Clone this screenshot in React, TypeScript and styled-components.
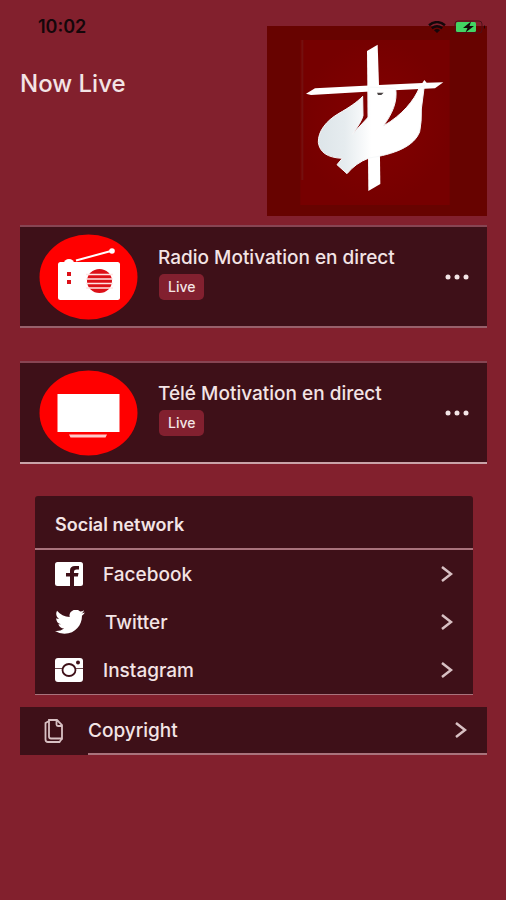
import React from "react";
import styled, { createGlobalStyle } from "styled-components";

const line = "#a9737c";

const GlobalStyle = createGlobalStyle`
  *, *::before, *::after { box-sizing: border-box; }
  body {
    margin: 0;
    background: #82202d;
    color: #f3e4e5;
    font-family: Inter, "Liberation Sans", sans-serif;
  }
`;

const Screen = styled.div`
  position: relative;
  min-height: 100vh;
  padding: 26px 19px 32px 20px;
`;

const StatusBar = styled.div`
  position: absolute;
  z-index: 1;
  top: 16px;
  left: 38px;
  right: 20px;
  display: flex;
  align-items: center;
  justify-content: space-between;
  color: #14070a;
`;

const Clock = styled.time`
  font-size: 18px;
  line-height: 22px;
  font-weight: 600;
`;

const StatusIcons = styled.div`
  display: flex;
  align-items: center;
  gap: 8px;

  svg { display: block; }
`;

const Header = styled.header`
  display: flex;
  justify-content: space-between;
  align-items: flex-start;
`;

const Title = styled.h1`
  margin: 42px 0 0;
  font-size: 24px;
  line-height: 32px;
  font-weight: 500;
`;

const Logo = styled.svg`
  display: block;
  flex: none;
  width: 220px;
  height: 190px;
`;

const StreamList = styled.main`
  display: flex;
  flex-direction: column;
  gap: 33px;
  margin-top: 9px;
`;

const Stream = styled.article<{ $top: string; $bottom: string }>`
  display: flex;
  align-items: flex-start;
  height: 103px;
  padding: 7px 18px 7px 19px;
  background: #3e1018;
  border-top: 2px solid ${(p) => p.$top};
  border-bottom: 2px solid ${(p) => p.$bottom};
`;

const StreamArt = styled.svg`
  display: block;
  flex: none;
  width: 99px;
  height: 86px;
`;

const StreamText = styled.div`
  flex: 1;
  display: flex;
  flex-direction: column;
  align-items: flex-start;
  gap: 4px;
  padding: 12px 0 0 20px;
`;

const StreamName = styled.h2`
  margin: 0;
  font-size: 19px;
  line-height: 24px;
  font-weight: 500;
`;

const Badge = styled.span`
  margin-left: 1px;
  padding: 0 9px;
  border-radius: 5px;
  background: #82202f;
  font-size: 14px;
  line-height: 26px;
  font-weight: 500;
`;

const MoreButton = styled.button`
  display: flex;
  align-self: center;
  padding: 8px 0;
  border: 0;
  background: none;
  color: inherit;
  cursor: pointer;
`;

const Social = styled.nav`
  margin: 32px 14px 0 15px;
  border-bottom: 1px solid ${line};
  border-radius: 3px 3px 0 0;
  background: #3e1018;
`;

const SocialTitle = styled.h2`
  margin: 0;
  padding: 16px 20px 11px;
  border-bottom: 2px solid ${line};
  font-size: 18px;
  line-height: 25px;
  font-weight: 600;
`;

const LinkRow = styled.a`
  display: flex;
  align-items: center;
  gap: 20px;
  height: 48px;
  padding: 0 20px;
  color: inherit;
  font-size: 19px;
  line-height: 24px;
  font-weight: 500;
  text-decoration: none;

  svg { display: block; flex: none; }
`;

const LinkLabel = styled.span`
  flex: 1;
  padding-top: 2px;
`;

const CopyrightRow = styled(LinkRow)`
  gap: 0;
  margin-top: 12px;
  padding: 0 0 0 22px;
  background: #3e1018;
`;

const CopyrightBody = styled.span`
  flex: 1;
  display: flex;
  align-items: center;
  height: 100%;
  margin-left: 22px;
  padding-right: 20px;
  border-bottom: 2px solid ${line};
`;

const Wifi = () => (
  <svg width="18" height="12" viewBox="0 0 18 12" fill="none" stroke="currentColor" strokeWidth="2.4">
    <path d="M1 4.2Q9-2 17 4.2M3.8 7.2Q9 3.2 14.2 7.2" />
    <path d="M6 9.2Q9 7 12 9.2L9 12Z" fill="currentColor" stroke="none" />
  </svg>
);

const Battery = () => (
  <svg width="32" height="14" viewBox="0 0 32 14">
    <rect x="1" y="1" width="27" height="12" rx="3" fill="none" stroke="#4e1019" />
    <path d="M30 5q2 2 0 4z" fill="#14070a" />
    <rect x="2" y="2" width="20" height="10" rx="1.5" fill="#42d463" />
    <path d="M17 1.500 9 8h4.500l-2 4.500L20 6h-4.500z" fill="#14070a" />
  </svg>
);

const DoveLogo = () => (
  <Logo viewBox="0 0 660 570" role="img" aria-label="Radio Motivation">
    <defs>
      <radialGradient id="panel">
        <stop offset="0" stopColor="#840000" />
        <stop offset="1" stopColor="#760000" />
      </radialGradient>
      <linearGradient id="dove">
        <stop offset="0" stopColor="#dde5e9" />
        <stop offset="0.25" stopColor="#e6ecef" />
        <stop offset="0.5" stopColor="#fff" />
      </linearGradient>
    </defs>
    <rect width="660" height="570" fill="#670300" />
    <rect x="100" y="42" width="448" height="495" fill="url(#panel)" />
    <path d="M106 42v420" stroke="#74100f" strokeWidth="6" />
    <g transform="translate(96 27)">
      <path d="M204 48 236 29 240 150 244 447 208 468Z" fill="#fff" />
      <path d="M21 176 48 160 240 150 370 144 376 135 383 143 433 142 408 160 240 168 36 180Z" fill="#fff" />
      <path
        d="M191 184C174 202 150 218 120 235C80 258 57 290 58 322C62 352 85 368 130 370L114 389L144 416Q170 384 210 369C285 358 345 335 362 290Q368 262 367 222L376 152L362 156C346 196 310 240 253 273C280 236 296 200 290 160L208 156L208 246L160 298Q188 260 192 242Z"
        fill="url(#dove)"
        stroke="#f7f9fa"
        strokeWidth="3"
      />
      <path d="M234 173h20l-7 7h-10z" fill="#4b4545" />
    </g>
  </Logo>
);

const RadioArt = () => (
  <StreamArt viewBox="0 0 99 86" aria-hidden="true">
    <ellipse cx="49.500" cy="43" rx="49" ry="42.500" fill="#ff0000" />
    <path d="M37 26.500 72 17" stroke="#fff" strokeWidth="2" />
    <circle cx="73" cy="17" r="2.800" fill="#fff" />
    <path d="M25 29a5 4 0 0 1 10 0z" fill="#fff" />
    <rect x="19" y="28" width="62" height="38" rx="2.500" fill="#fff" />
    <path d="M28 38h4v4h-4zM28 46h4v4h-4z" fill="#dc1018" />
    <ellipse cx="60.500" cy="47" rx="12.500" ry="12" fill="#dc1018" />
    <path d="M47 40.500h27M47 45h27M47 49.500h27M47 54h27" stroke="#ffe3e3" strokeWidth="1.600" />
  </StreamArt>
);

const TvArt = () => (
  <StreamArt viewBox="0 0 99 86" aria-hidden="true">
    <ellipse cx="49.500" cy="43" rx="49" ry="42.500" fill="#ff0000" />
    <rect x="18.500" y="24" width="62" height="38" fill="#fff" />
    <path d="M30 64.500h38l-1.500 3h-35z" fill="#ffc9c9" />
  </StreamArt>
);

const Dots = () => (
  <svg width="24" height="6" viewBox="0 0 24 6" fill="currentColor" aria-hidden="true">
    <circle cx="3" cy="3" r="2.500" />
    <circle cx="12" cy="3" r="2.500" />
    <circle cx="21" cy="3" r="2.500" />
  </svg>
);

const Chevron = () => (
  <svg width="13" height="16" viewBox="0 0 13 16" fill="none" stroke="#d8c0c3" strokeWidth="2.500" aria-hidden="true">
    <path d="M2 1 11 8 2 15" />
  </svg>
);

const FacebookIcon = () => (
  <svg width="28" height="24" viewBox="0 0 28 24" aria-hidden="true">
    <rect width="28" height="24" rx="2.500" fill="#fff" />
    <path d="M15 24v-9.500h-4v-3.500h4V8.500Q15 4 20 4h4v3.500h-2.500Q19 7.500 19 9.500V11h4.500l-.6 3.500H19V24z" fill="#3e1018" />
  </svg>
);

const TwitterIcon = () => (
  <svg width="30" height="24" viewBox="0 2.500 24 19.500" preserveAspectRatio="none" fill="#fff" aria-hidden="true">
    <path d="M23.954 4.569a10 10 0 0 1-2.825.775 4.958 4.958 0 0 0 2.163-2.723c-.951.555-2.005.959-3.127 1.184a4.920 4.920 0 0 0-8.384 4.482C7.691 8.094 4.066 6.130 1.640 3.161a4.822 4.822 0 0 0-.666 2.475c0 1.710.870 3.213 2.188 4.096a4.904 4.904 0 0 1-2.228-.616v.061a4.923 4.923 0 0 0 3.946 4.827 4.996 4.996 0 0 1-2.212.085 4.937 4.937 0 0 0 4.604 3.417 9.868 9.868 0 0 1-6.102 2.105c-.39 0-.779-.023-1.170-.067a13.995 13.995 0 0 0 7.557 2.209c9.054 0 13.999-7.496 13.999-13.986 0-.209 0-.42-.015-.630a9.936 9.936 0 0 0 2.413-2.568z" />
  </svg>
);

const InstagramIcon = () => (
  <svg width="28" height="24" viewBox="0 0 28 24" aria-hidden="true">
    <rect width="28" height="24" rx="3" fill="#fff" />
    <path d="M0 10.500h8M20 10.500h8" stroke="#6b4950" strokeWidth="1" />
    <ellipse cx="14" cy="12" rx="6.500" ry="6" fill="#fff" stroke="#3e1018" strokeWidth="1.800" />
    <circle cx="23" cy="4.500" r="2" fill="#3e1018" />
  </svg>
);

const PagesIcon = () => (
  <svg width="24" height="26" viewBox="0 0 24 26" fill="none" stroke="#d8c0c3" strokeWidth="1.800" aria-hidden="true">
    <path d="M7 2h8l5 5v13.500H9Q7 20.500 7 18.500zM14.500 2v4.500Q14.500 8 16 8H20" />
    <path d="M7 3 3.500 5v16.500Q3.500 24 6 24h11.500l2.500-3.500" />
  </svg>
);

const streams = [
  { name: "Radio Motivation en direct", Art: RadioArt, top: "#874553", bottom: "#98606b" },
  { name: "Télé Motivation en direct", Art: TvArt, top: "#874553", bottom: "#c9a3a8" },
];

const networks = [
  { name: "Facebook", Icon: FacebookIcon },
  { name: "Twitter", Icon: TwitterIcon },
  { name: "Instagram", Icon: InstagramIcon },
];

export default function App() {
  return (
    <Screen>
      <GlobalStyle />
      <StatusBar>
        <Clock>10:02</Clock>
        <StatusIcons>
          <Wifi />
          <Battery />
        </StatusIcons>
      </StatusBar>
      <Header>
        <Title>Now Live</Title>
        <DoveLogo />
      </Header>
      <StreamList>
        {streams.map(({ name, Art, top, bottom }) => (
          <Stream key={name} $top={top} $bottom={bottom}>
            <Art />
            <StreamText>
              <StreamName>{name}</StreamName>
              <Badge>Live</Badge>
            </StreamText>
            <MoreButton type="button" aria-label={`More options for ${name}`}>
              <Dots />
            </MoreButton>
          </Stream>
        ))}
      </StreamList>
      <Social aria-labelledby="social-title">
        <SocialTitle id="social-title">Social network</SocialTitle>
        {networks.map(({ name, Icon }) => (
          <LinkRow key={name} href="#">
            <Icon />
            <LinkLabel>{name}</LinkLabel>
            <Chevron />
          </LinkRow>
        ))}
      </Social>
      <CopyrightRow href="#">
        <PagesIcon />
        <CopyrightBody>
          <LinkLabel>Copyright</LinkLabel>
          <Chevron />
        </CopyrightBody>
      </CopyrightRow>
    </Screen>
  );
}
